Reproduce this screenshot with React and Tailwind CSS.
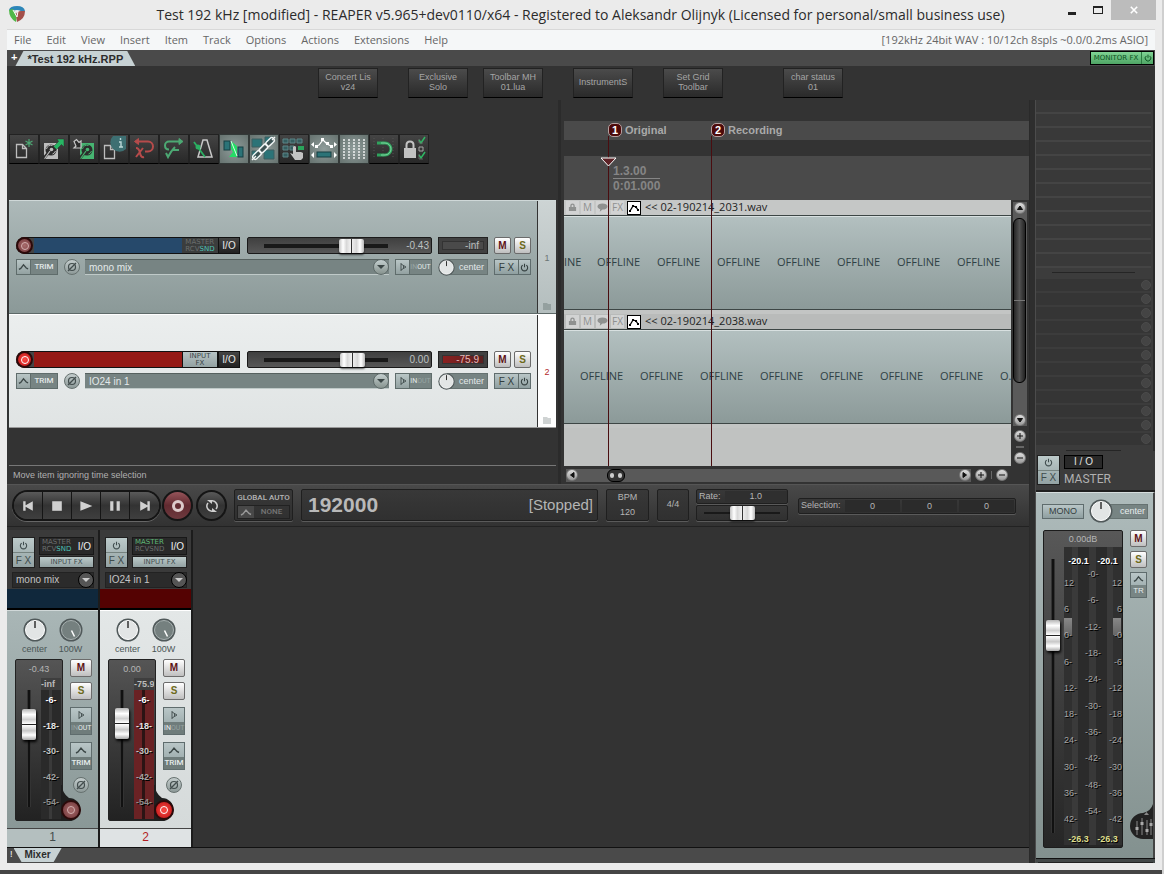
import React, { useState } from "react";

const customButtons = [
  { label: "Concert Lis v24", space: "ml-[311px]" },
  { label: "Exclusive Solo", space: "ml-[30px]" },
  { label: "Toolbar MH 01.lua", space: "ml-[15px]" },
  { label: "InstrumentS", space: "ml-[30px]" },
  { label: "Set Grid Toolbar", space: "ml-[30px]" },
  { label: "char status 01", space: "ml-[60px]" },
];

const menus = ["File", "Edit", "View", "Insert", "Item", "Track", "Options", "Actions", "Extensions", "Help"];

const tracks = [
  { id: 1, input: "mono mix", volume: "-0.43", level: 76, peak: "-inf", armed: false, selected: false },
  { id: 2, input: "IO24 in 1", volume: "0.00", level: 77, peak: "-75.9", armed: true, selected: true },
];

const items = [
  { file: "<< 02-190214_2031.wav", lead: "INE", leadWidth: "w-[33px]", tail: "", header: "bg-[#c5c7c6]" },
  { file: "<< 02-190214_2038.wav", lead: "", leadWidth: "w-4", tail: "O.", header: "bg-[#b9bbba]" },
];

const hSlider =
  "appearance-none bg-[linear-gradient(#191919,#191919)] bg-no-repeat bg-center [&::-webkit-slider-thumb]:appearance-none [&::-webkit-slider-thumb]:w-[25px] [&::-webkit-slider-thumb]:h-[14px] [&::-webkit-slider-thumb]:rounded-xs [&::-webkit-slider-thumb]:shadow-[0_2px_2px_#0009] [&::-webkit-slider-thumb]:bg-[linear-gradient(90deg,#c4c4c4,#fff_16%,#d8d8d8_30%,#f4f4f4_48%,#333_48%,#333_52%,#eee_52%,#d8d8d8_70%,#fff_84%,#b8b8b8)]";

const vSlider =
  "appearance-none [writing-mode:vertical-lr] [direction:rtl] w-[14px] bg-[linear-gradient(90deg,#555,#111_25%,#111_75%,#555)] bg-size-[4px_100%] bg-no-repeat bg-center [&::-webkit-slider-thumb]:appearance-none [&::-webkit-slider-thumb]:w-[14px] [&::-webkit-slider-thumb]:h-[31px] [&::-webkit-slider-thumb]:rounded-xs [&::-webkit-slider-thumb]:shadow-[1px_2px_3px_#000] [&::-webkit-slider-thumb]:bg-[linear-gradient(#b5b5b5,#fff_18%,#cfcfcf_34%,#fff_48%,#222_48%,#222_52%,#fff_52%,#c8c8c8_70%,#fff_84%,#aaa)]";

const lightButton = "bg-linear-to-b from-[#b9c6c7] to-[#8f9fa0] border border-[#5f6c6d]";

const Power = ({ className }) => (
  <svg viewBox="0 0 10 10" className={className} fill="none" stroke="currentColor" strokeWidth="1.2">
    <path d="M3 2.4a3.5 3.5 0 1 0 4 0M5 .8v4" />
  </svg>
);

const Envelope = ({ className }) => (
  <svg viewBox="0 0 12 10" className={className} fill="none" stroke="currentColor" strokeWidth="1.4">
    <path d="M1 8l2-1 3-4 3 3.500 2 1" />
  </svg>
);

const Phase = ({ label }) => (
  <button
    aria-label={label}
    className="w-4 h-4 shrink-0 rounded-full border border-[#66716f] bg-linear-to-b from-[#c4cdcd] to-[#8d9998] text-[#424d4d]"
  >
    <svg viewBox="0 0 14 14" fill="none" stroke="currentColor" strokeWidth="1.2">
      <circle cx="7" cy="7" r="3.500" />
      <path d="M3 11l8-8" />
    </svg>
  </button>
);

const Speaker = () => (
  <svg viewBox="0 0 10 10" className="w-[10px] h-[10px]" fill="none" stroke="#4a5656">
    <path d="M3 1v8M3 2l5 3-5 3M5.500 3.500v3" />
  </svg>
);

const Mute = ({ className }) => (
  <button
    aria-label="Mute"
    className={`rounded-xs border border-[#6b6b6b] bg-linear-to-b from-white to-[#bfbfbf] text-[10px] leading-[12px] font-bold text-[#5e1217] ${className}`}
  >
    M
  </button>
);

const Solo = ({ className }) => (
  <button
    aria-label="Solo"
    className={`rounded-xs border border-[#6b6b6b] bg-linear-to-b from-white to-[#bfbfbf] text-[10px] leading-[12px] font-bold text-[#6d6a1b] ${className}`}
  >
    S
  </button>
);

const Arm = ({ armed, className }) => (
  <button
    aria-label="Record arm"
    className={`flex items-center justify-center shrink-0 rounded-full border-2 border-[#2c0a0a] ${
      armed ? "bg-radial from-[#ff4a45] to-[#b8060f]" : "bg-radial from-[#a86c6c] to-[#6e3337]"
    } ${className}`}
  >
    <span className={`w-2 h-2 rounded-full border ${armed ? "border-white" : "border-[#d3aeae]"}`} />
  </button>
);

const PanKnob = ({ label, size, dark }) => (
  <button aria-label={label} className={`relative z-10 ${size} shrink-0`}>
    <svg viewBox="0 0 24 24">
      <circle cx="12" cy="12" r="11.500" fill="#50595a" />
      <circle cx="12" cy="12" r="9.500" fill={dark ? "#75807f" : "#e2e5e5"} stroke={dark ? "#a7b0b0" : "#fff"} strokeWidth="1" />
      <path d={dark ? "M12.500 12.500l3 6" : "M12 3v7"} stroke={dark ? "#fff" : "#333"} strokeWidth="1.5" />
    </svg>
  </button>
);

/* ---------- toolbar ---------- */

const Disk = ({ x, y, color }) => (
  <g>
    <rect x={x} y={y} width="14" height="16" fill={color} />
    <circle cx={x + 7} cy={y + 7} r="5.500" fill="#2c2c2c" />
    <path d={`M${x + 2.5} ${y + 6}a4.500 4.500 0 0 1 6-3.500M${x + 11.5} ${y + 8}a4.500 4.500 0 0 1-3 3`} fill="none" stroke={color} />
    <circle cx={x + 7.5} cy={y + 6.5} r="1.800" fill={color} />
    <path d={`M${x} ${y + 15}l6-7`} stroke="#2c2c2c" strokeWidth="3" />
    <path d={`M${x + 1} ${y + 15}l5-7`} stroke={color} strokeWidth="1.200" />
  </g>
);

const page = (x, y) => `M${x} ${y}h6l4 4v9h-10zM${x + 6} ${y}v4h4`;

const toolbar = [
  {
    name: "New project",
    icon: (
      <g fill="none">
        <path d={page(7.5, 10.5)} stroke="#bdbdbd" strokeWidth="1.300" />
        <path d="M20 5v8M16.500 7l7 4M23.500 7l-7 4" stroke="#4da673" strokeWidth="1.200" />
      </g>
    ),
  },
  {
    name: "Open project",
    icon: (
      <g>
        <Disk x={5} y={9} color="#bdbdbd" />
        <path d="M18 5h7v8l-2.500-2.500-5 5-3-3 5-5z" fill="#27b563" stroke="#2c2c2c" strokeWidth=".5" />
      </g>
    ),
  },
  {
    name: "Save project",
    icon: (
      <g>
        <Disk x={11} y={9} color="#46b471" />
        <path d="M5 7.500l2.500-2 2.500 3 2-1.500v7h-7l2-2z" fill="#2c2c2c" stroke="#c8c8c8" strokeWidth="1.200" />
      </g>
    ),
  },
  {
    name: "Project settings",
    icon: (
      <g>
        <path d={page(5.5, 11.5)} fill="none" stroke="#bdbdbd" strokeWidth="1.300" />
        <path d="M27 2H14a8 8 0 0 0 13 13z" fill="#3d6f72" />
        <path d="M21.500 4v2M20 8h2v5M20 13h4" fill="none" stroke="#bcd9d9" strokeWidth="1.400" />
      </g>
    ),
  },
  {
    name: "Undo",
    icon: (
      <g fill="none" stroke="#b64b4b" strokeWidth="2">
        <path d="M7 7.500h12a5 5 0 0 1 0 10h-3" />
        <path d="M9.500 4.500l-4 3 4 3z" fill="#b64b4b" strokeWidth="1" />
        <path d="M7 14q3 0 4 5t4 4M14 14l-7 9" />
      </g>
    ),
  },
  {
    name: "Redo",
    icon: (
      <g fill="none" stroke="#4ca873" strokeWidth="2">
        <path d="M22 7.500h-12a4 4 0 0 0-4 4q0 4 4 4M14 16h6" />
        <path d="M20 4.500l4 3-4 3z" fill="#4ca873" strokeWidth="1" />
        <path d="M7 19l2 4q3-6 7-10" />
      </g>
    ),
  },
  {
    name: "Metronome",
    icon: (
      <g fill="none">
        <path d="M14 6h4l5 17H9z" stroke="#c8c8c8" strokeWidth="1.500" />
        <path d="M5 8l11 15" stroke="#2bb062" strokeWidth="1.800" />
        <circle cx="9" cy="13" r="2.500" fill="#2bb062" />
      </g>
    ),
  },
  {
    name: "Auto crossfade",
    on: true,
    icon: (
      <g>
        <rect x="5" y="7" width="6" height="9" fill="#2b7377" stroke="#173f42" />
        <rect x="19" y="13" width="5" height="10" fill="#2b7377" stroke="#173f42" />
        <path d="M12 7l6 5v11h-8l4-5-2-3z" fill="#25dc66" />
        <path d="M12 7l6 15" stroke="#d6ffe4" strokeWidth="1" />
      </g>
    ),
  },
  {
    name: "Item grouping",
    on: true,
    icon: (
      <g>
        <path d="M3 5h10v8H3zM16 3h8v6h-8zM3 17h7v7H3zM15 16h10v9H15z" fill="#2b7377" stroke="#3e5f60" />
        <path d="M4 25L25 4" stroke="#3d5152" strokeWidth="3" />
        <g fill="none" stroke="#f2f5f5" strokeWidth="1.400">
          <rect x="-5" y="-2.500" width="10" height="5" rx="2.500" transform="translate(8 21) rotate(-45)" />
          <rect x="-5" y="-2.500" width="10" height="5" rx="2.500" transform="translate(14.500 14.500) rotate(-45)" />
          <rect x="-5" y="-2.500" width="10" height="5" rx="2.500" transform="translate(21 8) rotate(-45)" />
          <path d="M3 26l4-4M23 6l3-3" />
        </g>
      </g>
    ),
  },
  {
    name: "Ripple editing",
    icon: (
      <g>
        <path
          d="M4 5h5v4h-5zM11 5h5v4h-5zM18 5h5v4h-5zM4 12h5v4h-5zM11 12h4v4h-4zM4 19h5v4h-5z"
          fill="#355d5f"
          stroke="#5d8688"
        />
        <rect x="19" y="12" width="6" height="4" fill="#2aa45b" />
        <path d="M14 13q2-2 3 0v5h5l2 1v5l-2 2h-6l-5-7 3 1z" fill="#c3c3c3" />
      </g>
    ),
  },
  {
    name: "Envelope points move with items",
    on: true,
    icon: (
      <g>
        <path d="M7 12l3-1 4-5 4 4 4 2" fill="none" stroke="#fff" strokeWidth="1.200" />
        <path d="M6 11h3v3h-3zM12 4h3v3h-3zM17 8h3v3h-3zM21 11h3v3h-3z" fill="#fff" />
        <path d="M5 8v5l-3-2.500zM25 8v5l3-2.500zM5 18v6l-3-3zM25 18v6l3-3z" fill="#fff" />
        <rect x="8" y="18" width="14" height="5" fill="#2b7377" stroke="#173f42" />
      </g>
    ),
  },
  {
    name: "Grid lines",
    on: true,
    icon: <path d="M5 5v20M10 5v20M15 5v20M20 5v20M25 5v20" stroke="#fff" strokeWidth="1.300" strokeDasharray="2 1" />,
  },
  {
    name: "Snapping",
    icon: (
      <g fill="none">
        <path d="M5 4v20M14 4v20M24 4v20" stroke="#555" strokeDasharray="1 2" />
        <path d="M8 9h8a5.500 5.500 0 0 1 0 12H8" stroke="#2fa35d" strokeWidth="3" />
        <path d="M12 9h4a5.500 5.500 0 0 1 0 12h-4" stroke="#7fd3a0" strokeWidth="1" />
      </g>
    ),
  },
  {
    name: "Locking",
    icon: (
      <g fill="none">
        <rect x="5" y="14" width="12" height="10" fill="#c3c3c3" />
        <path d="M7.500 14v-3q0-3.500 3.500-3.500t3.500 3.500v3" stroke="#c3c3c3" strokeWidth="2" />
        <path d="M20 13h4v4h-4z" stroke="#a5a5a5" />
        <path d="M20 6l2 3 4-6M20 21l2 3 4-6" stroke="#2fb864" strokeWidth="1.500" />
        <path d="M20 5v4h4M20 20v5h4" stroke="#777" strokeWidth=".7" />
      </g>
    ),
  },
];

/* ---------- track panel ---------- */

const RoutingLabel = ({ master, send }) => (
  <span className="font-['DejaVu_Sans'] text-[7px] leading-[7px] text-left">
    <span className={`block ${master ? "text-[#5fb877]" : "text-[#6a6d6d]"}`}>MASTER</span>
    <span className="text-[#6a6d6d]">RCV</span>
    <span className={send ? "text-[#4cc0b5]" : "text-[#6a6d6d]"}>SND</span>
  </span>
);

const TrackRow = ({ track }) => {
  const { id, armed, selected } = track;
  return (
    <div
      className={`flex h-[114px] border-t border-b ${
        selected
          ? "border-t-white border-b-[#999] bg-linear-to-b from-[#ebeeee] to-[#e0e4e4]"
          : "border-t-[#cfd8d8] border-b-[#5d6968] bg-linear-to-b from-[#adb9b9] to-[#8b9998]"
      }`}
    >
      <div className="flex-1 min-w-0 pl-[7px] pr-[6px] pt-[36px] flex flex-col gap-[5px]">
        <div className="flex h-[17px]">
          <div className="flex flex-1 min-w-0 items-center bg-[#444] border-y border-[#111] rounded-l-full">
            <Arm armed={armed} className="w-[17px] h-[17px]" />
            <input
              aria-label={`Track ${id} name`}
              defaultValue=""
              className={`flex-1 min-w-0 h-full ml-px px-1 text-[10px] text-white ${armed ? "bg-[#951915]" : "bg-[#26496b]"}`}
            />
            {armed ? (
              <button className="w-[36px] h-full bg-linear-to-b from-[#b7c3c4] to-[#93a1a2] font-['DejaVu_Sans'] text-[7px] leading-[7px] text-[#394446] border-x border-[#111]">
                INPUT
                <br />
                FX
              </button>
            ) : (
              <button className="flex items-center justify-center w-[36px] h-full bg-[#3b3d3d]">
                <RoutingLabel send />
              </button>
            )}
            <button className="w-[22px] h-full bg-linear-to-b from-[#454545] to-[#222] text-[10px] leading-[15px] text-[#e8e8e8] border-x border-[#111]">
              I/O
            </button>
          </div>
          <div className="ml-[7px] w-[185px] flex items-center bg-linear-to-b from-[#404040] to-[#575757] border border-[#1a1a1a] rounded-xs">
            <input
              type="range"
              aria-label={`Track ${id} volume`}
              defaultValue={track.level}
              className={`ml-4 w-[124px] h-[14px] bg-size-[100%_4px] ${hSlider}`}
            />
            <output className="flex-1 pr-0.5 text-right text-[10px] text-[#bdc1c1]">{track.volume}</output>
          </div>
          <div className="ml-[6px] w-[50px] p-[3px] bg-[#414141] border border-[#222]">
            <div
              className={`h-full pr-1 text-right text-[10px] leading-[8px] border border-[#333] ${
                armed ? "bg-linear-to-r from-[#8a1f1f] to-[#592020] text-[#e4b9b9]" : "bg-[#4a4a4a] text-[#b9bdbd]"
              }`}
            >
              {track.peak}
            </div>
          </div>
          <Mute className="ml-[6px] w-[17px] h-[17px]" />
          <Solo className="ml-[3px] w-[17px] h-[17px]" />
        </div>
        <div className="flex h-4 text-[9px] text-[#e3e9e9]">
          <button className="flex items-center w-[42px] bg-[#778483] border border-[#5f6c6b] font-['Roboto'] text-[8px] font-medium">
            <span className="flex items-center justify-center w-[14px] h-full bg-linear-to-b from-[#b9c6c6] to-[#93a1a1] border-r border-[#5f6c6b] text-[#3d4848]">
              <Envelope className="w-[11px]" />
            </span>
            <span className="flex-1 text-center">TRIM</span>
          </button>
          <div className="w-[27px] flex justify-center">
            <Phase label={`Track ${id} phase`} />
          </div>
          <div className="relative flex-1 min-w-0">
            <select
              aria-label={`Track ${id} input`}
              className="appearance-none w-full h-full pl-1 pr-5 bg-[#778483] border-t border-[#56615f] border-b border-b-[#bfc9c8] text-[10px] leading-[13px] text-[#e3e9e9]"
            >
              <option>{track.input}</option>
            </select>
            <span className="absolute right-0 top-0 flex items-center justify-center w-4 h-4 rounded-full border border-[#5d6968] bg-linear-to-b from-[#c4cfcf] to-[#87938f] pointer-events-none">
              <svg viewBox="0 0 8 6" className="w-2" fill="#3b4646">
                <path d="M0 1h8L4 5z" />
              </svg>
            </span>
          </div>
          <button className="ml-[6px] w-[37px] flex items-center bg-[#778483] border border-[#5f6c6b] font-['Roboto'] text-[8px]">
            <span className="flex items-center justify-center w-[14px] h-full bg-linear-to-b from-[#b9c6c6] to-[#93a1a1] border-r border-[#5f6c6b]">
              <Speaker />
            </span>
            <span className="flex-1 text-[7px]">
              <span className={armed ? "" : "text-[#98a4a3]"}>IN</span>
              <span className={armed ? "text-[#98a4a3]" : ""}>OUT</span>
            </span>
          </button>
          <div className="ml-[6px] w-[50px] flex items-center">
            <PanKnob label={`Track ${id} pan`} size="w-[17px] h-[17px]" />
            <span className="-ml-2 flex-1 h-full pr-[3px] text-right leading-[14px] bg-[#778483] border border-[#667271]">center</span>
          </div>
          <div className={`ml-[6px] w-[37px] flex ${lightButton} text-[#333e3e]`}>
            <button className="w-[23px] text-[10px] leading-[13px]">F X</button>
            <button aria-label="Bypass effects" className="flex-1 flex items-center justify-center border-l border-[#5f6c6b]">
              <Power className="w-[9px]" />
            </button>
          </div>
        </div>
      </div>
      <div
        className={`w-[19px] flex flex-col items-center justify-end gap-[38px] pb-[3px] border-l border-[#333] text-[9px] ${
          selected ? "bg-white text-[#b3282d]" : "bg-linear-to-b from-[#cdd4d4] to-[#b4bebe] text-[#6c7575]"
        }`}
      >
        {id}
        <svg viewBox="0 0 8 7" className="w-2" fill={selected ? "#cfd3d3" : "#94a09f"}>
          <path d="M0 0h4l1 1h3v6H0z" />
        </svg>
      </div>
    </div>
  );
};

/* ---------- arrange view ---------- */

const Item = ({ item }) => (
  <div className="h-[114px] bg-[#c3c5c4]">
    <div className={`flex items-center h-[15px] pl-0.5 gap-0.5 font-['Open_Sans'] text-[10px] text-[#8f9190] ${item.header}`}>
      <span className="flex items-center justify-center w-[13px] h-[13px] bg-[#d2d3d3]">
        <svg viewBox="0 0 10 10" className="w-[9px]" fill="#8f9190">
          <path d="M1 4.500h8V9H1zM2.500 5V3q0-2.500 2.500-2.500T7.500 3v2H6V3q0-1-1-1T4 3v2z" />
        </svg>
      </span>
      <span className="w-[13px] h-[13px] leading-[13px] text-center bg-[#d2d3d3]">M</span>
      <span className="flex items-center justify-center w-[13px] h-[13px] bg-[#d2d3d3]">
        <svg viewBox="0 0 12 10" className="w-[11px]" fill="#8f9190">
          <path d="M6 .5c3 0 5.500 1.300 5.500 3.300S9 7.200 6 7.200L3 9.500l.5-2.800C1.500 6 .5 5 .5 3.800.5 1.800 3 .5 6 .5z" />
        </svg>
      </span>
      <span className="w-[13px] h-[13px] leading-[13px] text-center bg-[#d2d3d3]">FX</span>
      <button aria-label="Take envelopes" className="ml-px w-[14px] h-[14px] bg-white border border-black">
        <svg viewBox="0 0 12 12" fill="none" stroke="#000" strokeWidth="1.300">
          <path d="M2 9l3-5 3 1 2 3" />
          <path d="M1 8h2v2H1zM4 3h2v2H4zM7 4h2v2H7zM9 7h2v2H9z" fill="#000" strokeWidth="0" />
        </svg>
      </button>
      <span className="ml-0.5 text-[11px] text-[#1e2424] whitespace-nowrap">{item.file}</span>
    </div>
    <div className="h-[95px] overflow-hidden flex items-center border-t border-b border-[#3d4645] bg-linear-to-b from-[#b3c0c0] to-[#8c9a99] shadow-[inset_0_1px_#d8e0e0] font-['Open_Sans'] text-[11px] text-[#2f4144]">
      <span className={`shrink-0 ${item.leadWidth}`}>{item.lead}</span>
      {Array.from({ length: 7 }, (_, i) => (
        <span key={i} className="w-[60px] shrink-0">
          OFFLINE
        </span>
      ))}
      <span>{item.tail}</span>
    </div>
  </div>
);

const RoundButton = ({ label, d }) => (
  <button aria-label={label} className="w-3 h-3 shrink-0 rounded-full bg-linear-to-b from-[#dedede] to-[#9a9a9a] border border-[#777]">
    <svg viewBox="0 0 10 10" fill="#111" stroke="#111">
      <path d={d} />
    </svg>
  </button>
);

const plus = "M2 5h6M5 2v6";
const minus = "M2 5h6";

const Marker = ({ n, name, left, line }) => (
  <>
    <div className={`absolute top-[22px] ${left} flex items-center gap-[3px] text-[11px] font-bold text-[#a9a9a9]`}>
      <span className="w-[14px] h-[14px] rounded-[5px] border border-[#b5a0a0] bg-[#4d0a0a] text-center text-[11px] leading-[12px] text-white">
        {n}
      </span>
      {name}
    </div>
    <div className={`absolute top-[36px] bottom-[18px] ${line} w-px bg-[#4a0d10]`} />
  </>
);

const Arrange = () => (
  <div className="relative flex-1 min-w-0 flex flex-col pt-[21px]">
    <div className="h-[19px] bg-[#4a4a4a]" />
    <div className="mt-4 h-[44px] pt-2 pl-[49px] bg-[#4a4a4a] text-[#858585] text-[12px] leading-[14px]">
      <span className="inline-block font-bold">
        <span className="block border-b border-[#858585]">1.3.00</span>
        0:01.000
      </span>
    </div>
    <div className="flex flex-1">
      <div className="flex-1 min-w-0 bg-[#c0c2c1]">
        {items.map((item) => (
          <Item key={item.file} item={item} />
        ))}
      </div>
      <div className="w-[18px] flex flex-col items-center pt-0.5 pr-px bg-[#333]">
        <div className="flex-1 flex flex-col items-center w-[14px] bg-[#5a5a5a]">
          <RoundButton label="Scroll up" d="M5 3l2.500 3.500h-5z" />
          <button
            aria-label="Vertical scroll"
            className="mt-1 flex items-center w-[13px] h-[165px] rounded-md border border-black bg-linear-to-r from-[#262626] via-[#525252] to-[#222]"
          >
            <span className="w-full h-px bg-[#777]" />
          </button>
          <span className="flex-1" />
          <RoundButton label="Scroll down" d="M5 7l2.500-3.500h-5z" />
        </div>
        <div className="flex flex-col items-center gap-1 pt-1 pb-0.5">
          <RoundButton label="Zoom in vertically" d={plus} />
          <span className="w-2 h-0.5 bg-[#666]" />
          <RoundButton label="Zoom out vertically" d={minus} />
        </div>
      </div>
    </div>
    <div className="flex items-center h-[18px] pl-0.5 pr-[21px] gap-1 bg-[#333]">
      <div className="flex flex-1 items-center h-[13px] bg-[#595959]">
        <RoundButton label="Scroll left" d="M3.500 5l3.500-2.500v5z" />
        <button
          aria-label="Horizontal scroll"
          className="ml-[29px] flex items-center justify-center gap-1 w-[18px] h-[13px] rounded-md border border-black bg-[#333]"
        >
          <span className="w-1 h-[5px] rounded-full bg-[#ccc]" />
          <span className="w-1 h-[5px] rounded-full bg-[#ccc]" />
        </button>
        <span className="flex-1" />
        <RoundButton label="Scroll right" d="M6.500 5L3 2.500v5z" />
      </div>
      <RoundButton label="Zoom in" d={plus} />
      <span className="w-px h-2 bg-[#666]" />
      <RoundButton label="Zoom out" d={minus} />
    </div>
    <Marker n={1} name="Original" left="left-[44px]" line="left-[44px]" />
    <Marker n={2} name="Recording" left="left-[147px]" line="left-[147px]" />
    <svg viewBox="0 0 17 10" className="absolute top-[57px] left-[36px] w-[17px]">
      <path d="M1 1h15L8.500 9z" fill="#5c2226" stroke="#fff" />
    </svg>
  </div>
);

/* ---------- transport ---------- */

const transportButtons = [
  { name: "Go to start", d: "M4 4h3v5l9-5v12l-9-5v5H4z" },
  { name: "Stop", d: "M4 4h12v12H4z" },
  { name: "Play", d: "M3 4l15 6-15 6z" },
  { name: "Pause", d: "M4 4h4v12H4zM12 4h4v12h-4z" },
  { name: "Go to end", d: "M16 4h-3v5L4 4v12l9-5v5h3z" },
];

const box = "border border-[#1f1f1f] rounded-xs bg-linear-to-b from-[#383838] to-[#303030] shadow-[0_1px_#5a5a5a]";

const Transport = () => (
  <div className="h-[43px] shrink-0 flex items-start pt-1 pl-[5px] pr-[13px] bg-linear-to-b from-[#494949] to-[#323232] border-t border-[#555] border-b border-b-[#222] text-[#b5b5b5]">
    <div className="mt-px flex h-[31px] rounded-full overflow-hidden border-2 border-[#151515] shadow-[0_1px_#666]">
      {transportButtons.map((b) => (
        <button
          key={b.name}
          aria-label={b.name}
          className="flex items-center justify-center w-[29px] bg-linear-to-b from-[#5a5a5a] via-[#333] to-[#3f3f3f] not-last:border-r border-[#151515]"
        >
          <svg viewBox="0 0 20 20" className="w-4" fill="#d0d0d0">
            <path d={b.d} />
          </svg>
        </button>
      ))}
    </div>
    <button
      aria-label="Record"
      className="mt-px ml-px flex items-center justify-center w-[31px] h-[31px] shrink-0 rounded-full border-2 border-[#151515] bg-linear-to-b from-[#96545a] via-[#612a30] to-[#6e3a3f]"
    >
      <span className="w-3 h-3 rounded-full border-[3px] border-[#dccaca]" />
    </button>
    <button
      aria-label="Repeat"
      className="mt-px ml-[3px] flex items-center justify-center w-[31px] h-[31px] shrink-0 rounded-full border-2 border-[#151515] bg-linear-to-b from-[#5a5a5a] via-[#333] to-[#3f3f3f]"
    >
      <svg viewBox="0 0 16 16" className="w-4" fill="none" stroke="#d0d0d0" strokeWidth="1.500">
        <path d="M7 3a5 5 0 0 1 5 8M9 13a5 5 0 0 1-5-8" />
        <path d="M3 2h5v4zM13 14H8v-4z" fill="#d0d0d0" strokeWidth="0" />
      </svg>
    </button>
    <div className={`ml-[7px] w-[59px] h-8 p-0.5 shrink-0 ${box} font-['Roboto'] text-[8px] font-medium text-center`}>
      <div className="leading-[11px] whitespace-nowrap">GLOBAL AUTO</div>
      <button className="mt-0.5 flex items-center w-full h-[14px] border border-[#222] text-[#767676]">
        <span className="flex items-center justify-center w-4 h-full bg-[#484848] text-[#999]">
          <Envelope className="w-3" />
        </span>
        <span className="flex-1">NONE</span>
      </button>
    </div>
    <div className={`ml-2 flex-1 h-8 pl-1.5 pr-1 flex items-center justify-between ${box}`}>
      <span className="text-[21px] font-bold text-[#b9b9b9]">192000</span>
      <span className="text-[15px]">[Stopped]</span>
    </div>
    <label className={`ml-2 w-[43px] h-8 flex flex-col text-center text-[9px] leading-[15px] ${box}`}>
      BPM
      <input defaultValue="120" className="w-full h-[15px] text-center" />
    </label>
    <button className={`ml-2 w-[32px] h-8 text-[9px] ${box}`}>4/4</button>
    <div className="ml-[7px] w-[92px]">
      <label className={`flex items-center h-[15px] pl-0.5 text-[9px] ${box}`}>
        Rate:
        <input defaultValue="1.0" className="ml-1 flex-1 min-w-0 h-[11px] text-center bg-[#2f2f2f]" />
      </label>
      <div className={`mt-px h-4 flex items-center px-[7px] ${box}`}>
        <input type="range" aria-label="Play rate" defaultValue="50" className={`w-full h-[14px] bg-size-[100%_2px] ${hSlider}`} />
      </div>
    </div>
    <div className={`ml-[10px] mt-[9px] w-[218px] h-4 flex items-center gap-0.5 p-px pl-0.5 text-[9px] ${box}`}>
      <span className="w-[42px]">Selection:</span>
      <input aria-label="Selection start" defaultValue="0" className="flex-1 min-w-0 h-full text-center bg-[#2b2b2b]" />
      <input aria-label="Selection end" defaultValue="0" className="flex-1 min-w-0 h-full text-center bg-[#2b2b2b]" />
      <input aria-label="Selection length" defaultValue="0" className="flex-1 min-w-0 h-full text-center bg-[#2b2b2b]" />
    </div>
  </div>
);

/* ---------- mixer ---------- */

const Strip = ({ track }) => {
  const { id, armed, selected } = track;
  return (
    <div className="w-[93px] flex flex-col border-r-2 border-[#1c1c1c]">
      <div className="h-[59px] pt-[7px] pl-[5px] pr-1 bg-[#3a3a3a]">
        <div className="flex gap-1">
          <div className="w-[23px] h-[31px] flex flex-col bg-linear-to-b from-[#bccaca] to-[#93a2a3] border border-[#202020] text-[#3f4c4d]">
            <button aria-label="Bypass effects" className="flex-1 flex items-center justify-center border-b border-[#75827f]">
              <Power className="w-[9px]" />
            </button>
            <button className="flex-1 text-[10px] leading-[13px]">F X</button>
          </div>
          <div className="flex-1">
            <button className="flex items-center justify-between w-full h-[18px] px-0.5 border border-[#181818] bg-[#292929] text-[10px] text-[#eee]">
              <RoutingLabel master={armed} send={!armed} />
              I/O
            </button>
            <button className="block w-full h-3 mt-px bg-linear-to-b from-[#bccaca] to-[#93a2a3] border border-[#202020] font-['DejaVu_Sans'] text-[7px] leading-[10px] text-[#3f4c4d]">
              INPUT FX
            </button>
          </div>
        </div>
        <div className="relative mt-1">
          <select
            aria-label={`Channel ${id} input`}
            className="appearance-none block w-full h-4 pl-[3px] bg-[#2b2b2b] border border-[#222] text-[10px] leading-[14px] text-[#c4c4c4]"
          >
            <option>{track.input}</option>
          </select>
          <span className="absolute right-0 top-0 flex items-center justify-center w-4 h-4 rounded-full border border-black bg-[#555] pointer-events-none">
            <svg viewBox="0 0 8 6" className="w-2" fill="#ccc">
              <path d="M0 1h8L4 5z" />
            </svg>
          </span>
        </div>
      </div>
      <div className={`h-[21px] border-b-2 border-black ${armed ? "bg-[#540202]" : "bg-[#10283c]"}`} />
      <div
        className={`h-[218px] pt-[7px] border-t ${
          selected ? "border-white bg-linear-to-b from-[#e3e7e7] to-[#d5dada]" : "border-[#d0d8d8] bg-linear-to-b from-[#a9b6b6] to-[#8a9897]"
        }`}
      >
        <div className="flex justify-center text-[9px] leading-[14px] text-[#4a5555]">
          <div className="w-[36px] flex flex-col items-center">
            <PanKnob label="Pan" size="w-6 h-6" />
            center
          </div>
          <div className="w-[36px] flex flex-col items-center">
            <PanKnob label="Width" size="w-6 h-6" dark />
            100W
          </div>
        </div>
        <div className="mt-[3px] pl-2 flex gap-[7px]">
          <div className="relative w-[48px] h-[162px] flex flex-col rounded-xs border border-[#222] bg-linear-to-b from-[#555] to-[#222]">
            <output className="pt-1 text-center text-[9px] leading-[10px] text-[#b5b5b5]">{track.volume}</output>
            <div className="flex flex-1 pl-[6px]">
              <input
                type="range"
                aria-label={`Channel ${id} volume`}
                defaultValue={track.level + 2}
                className={`mt-4 h-[117px] ${vSlider}`}
              />
              <div className="ml-[5px] mt-1 w-[20px] h-[141px] flex flex-col">
                <div className="h-3 overflow-hidden whitespace-nowrap bg-[#3e3e3e] text-[9px] leading-[12px] font-bold text-[#bbb]">
                  {track.peak}
                </div>
                <div
                  className={`flex-1 pt-[5px] pb-[12px] flex flex-col justify-between items-center text-[9px] leading-[10px] font-bold [text-shadow:1px_1px_#000] ${
                    armed
                      ? "bg-[linear-gradient(90deg,#6a2224_8px,#2b1414_8px,#2b1414_11px,#6a2224_11px)]"
                      : "bg-[linear-gradient(90deg,#2a2a2a_8px,#3a3a3a_8px,#3a3a3a_11px,#2a2a2a_11px)]"
                  }`}
                >
                  <span className="text-white">-6-</span>
                  <span className="text-[#e4e4e4]">-18-</span>
                  <span className="text-[#c4c4c4]">-30-</span>
                  <span className="text-[#a4a4a4]">-42-</span>
                  <span className="text-[#8e8e8e]">-54-</span>
                </div>
              </div>
            </div>
            <svg viewBox="0 0 22 36" className="absolute left-[45px] -bottom-px w-[22px] h-[36px]" fill="#1f1f1f">
              <path d="M0 0H1Q1 8 8 13A11.500 11.500 0 1 1 8 36H0z" />
            </svg>
            <Arm armed={armed} className="absolute left-[45px] bottom-0 w-[20px] h-[20px]" />
          </div>
          <div className="flex flex-col w-[22px]">
            <Mute className="h-[18px]" />
            <Solo className="mt-[5px] h-[18px]" />
            <button className={`mt-[7px] h-[28px] flex flex-col ${lightButton} font-['Roboto'] text-[7px] text-[#e6ecec]`}>
              <span className="h-[14px] w-full flex items-center justify-center">
                <Speaker />
              </span>
              <span className="flex-1 w-full leading-[12px] bg-[#6f7c7b]">
                <span className={armed ? "" : "text-[#96a2a1]"}>IN</span>
                <span className={armed ? "text-[#96a2a1]" : ""}>OUT</span>
              </span>
            </button>
            <button className={`mt-[7px] h-[28px] flex flex-col ${lightButton} text-[#3c4747]`}>
              <span className="h-[14px] w-full flex items-center justify-center">
                <Envelope className="w-3" />
              </span>
              <span className="flex-1 w-full leading-[12px] bg-[#6f7c7b] font-['Roboto'] text-[8px] font-medium text-[#e6ecec]">TRIM</span>
            </button>
            <div className="mt-[7px] flex justify-center">
              <Phase label={`Channel ${id} phase`} />
            </div>
          </div>
        </div>
      </div>
      <div
        className={`h-[19px] border-t border-[#444] text-center text-[12px] leading-[17px] ${
          selected ? "bg-[#dfe3e4] text-[#b31d22]" : "bg-[#b4bfbf] text-[#434c4c]"
        }`}
      >
        {id}
      </div>
    </div>
  );
};

/* ---------- master ---------- */

const midScale = ["-0-", "-6-", "-12-", "-18-", "-24-", "-30-", "-36-", "-42-", "-48-", "-54-"];
const leftScale = ["12", "6", "0-", "6-", "12-", "18-", "24-", "30-", "36-", "42-"];
const rightScale = ["12", "6", "-0", "-6", "-12", "-18", "-24", "-30", "-36", "-42"];

const Master = () => (
  <aside className="w-[120px] shrink-0 flex flex-col border-l border-[#4c4c4c] bg-[#3c3c3c]">
    <div className="border-r-2 border-[#2a2a2a] pr-0.5">
      {Array.from({ length: 12 }, (_, i) => (
        <div key={i} className="h-[14px] border-b-2 border-[#444] bg-[#393939]" />
      ))}
      <div className="mx-4 mt-1 h-[7px] border-t border-[#252525]" />
      {Array.from({ length: 12 }, (_, i) => (
        <div key={i} className="h-[14px] flex justify-end border-b-2 border-[#3c3c3c] bg-[#353535]">
          <span className="w-[10px] h-[10px] mt-px rounded-full bg-[#444] border border-[#4b4b4b]" />
        </div>
      ))}
      <div className="mx-[30px] mt-[3px] border-t border-[#252525]" />
    </div>
    <div className="flex gap-1 pt-1 pl-px h-[41px] border-b-2 border-[#1f1f1f]">
      <div className="w-[23px] h-[30px] flex flex-col bg-linear-to-b from-[#bccaca] to-[#93a2a3] border border-[#202020] text-[#3f4c4d]">
        <button aria-label="Bypass master effects" className="flex-1 flex items-center justify-center border-b border-[#75827f]">
          <Power className="w-[9px]" />
        </button>
        <button className="flex-1 text-[10px] leading-[13px]">F X</button>
      </div>
      <div>
        <button className="block w-[39px] h-[14px] border border-black bg-[#292929] text-[10px] leading-[12px] text-[#e2e2e2]">I / O</button>
        <div className="mt-0.5 font-['Roboto'] text-[12px] leading-[16px] text-[#b0b0b0]">MASTER</div>
      </div>
    </div>
    <div className="relative h-[366px] border-t border-t-[#d5dddd] border-r-2 border-r-[#444] bg-linear-to-b from-[#aebbbb] to-[#83918f]">
      <div className="flex items-center pl-[6px] pr-[5px] pt-[6px]">
        <button className={`w-[42px] h-[15px] text-[9px] leading-[13px] text-[#333e3e] ${lightButton}`}>MONO</button>
        <div className="ml-[5px] flex flex-1 items-center">
          <PanKnob label="Master pan" size="w-6 h-6" />
          <span className="-ml-3 flex-1 h-[15px] pr-0.5 text-right text-[9px] leading-[13px] text-[#e8eeee] bg-[#778483] border border-[#667271]">
            center
          </span>
        </div>
      </div>
      <div className="flex pl-[7px] pt-[7px]">
        <div className="w-[80px] h-[318px] flex flex-col rounded-xs border border-[#1c1c1c] bg-linear-to-b from-[#585858] to-[#262626]">
          <output className="h-4 leading-[16px] text-center text-[9px] text-[#b5b5b5]">0.00dB</output>
          <div className="flex flex-1 pl-0.5">
            <input type="range" aria-label="Master volume" defaultValue="75" className={`mt-3 h-[274px] ${vSlider}`} />
            <div className="relative ml-1 flex-1 mb-0.5 flex flex-col text-[9px] leading-[12px] text-[#a5a5a5] [text-shadow:1px_1px_#000] bg-[linear-gradient(90deg,#303030_8px,#3a3a3a_8px,#3a3a3a_14px,#2b2b2b_14px,#2b2b2b_25px,#383838_25px,#383838_32px,#2b2b2b_32px,#2b2b2b_43px,#3a3a3a_43px,#3a3a3a_49px,#303030_49px)]">
              <span className="absolute left-0 top-[71px] w-2 h-[17px] bg-linear-to-b from-[#888] to-[#666]" />
              <span className="absolute right-px top-[71px] w-2 h-[17px] bg-linear-to-b from-[#888] to-[#666]" />
              <div className="mt-2 flex justify-around font-bold text-white">
                <span>-20.1</span>
                <span>-20.1</span>
              </div>
              <div className="relative flex-1 flex justify-between pt-px">
                <div className="mt-[9px] h-[248px] w-[17px] flex flex-col justify-between">
                  {leftScale.map((s, i) => (
                    <span key={i}>{s}</span>
                  ))}
                </div>
                <div className="h-[249px] flex flex-col justify-between text-center">
                  {midScale.map((s) => (
                    <span key={s}>{s}</span>
                  ))}
                </div>
                <div className="mt-[9px] h-[248px] w-[17px] flex flex-col justify-between text-right">
                  {rightScale.map((s, i) => (
                    <span key={i}>{s}</span>
                  ))}
                </div>
              </div>
              <div className="flex justify-around font-bold text-[#dede8c]">
                <span>-26.3</span>
                <span>-26.3</span>
              </div>
            </div>
          </div>
        </div>
        <div className="ml-[7px] w-[17px] flex flex-col">
          <Mute className="h-[17px]" />
          <Solo className="mt-1 h-[17px]" />
          <button className={`mt-1 h-[26px] flex flex-col ${lightButton} text-[#3c4747]`}>
            <span className="h-3 w-full flex items-center justify-center">
              <Envelope className="w-[11px]" />
            </span>
            <span className="flex-1 w-full text-[8px] leading-[12px] bg-[#788584] text-[#e6ecec]">TR</span>
          </button>
        </div>
      </div>
      <button aria-label="Show mixer" className="absolute right-0 bottom-[18px] w-6 h-[36px]">
        <svg viewBox="0 0 24 36">
          <path d="M24 0Q22 7 14 9A13 13 0 0 0 14 35H24z" fill="#222" />
          <path d="M8 17v14M13 14v17M18 16v15M22 15v16" stroke="#888" />
          <path d="M6.500 23h3v3h-3zM11.500 18h3v3h-3zM16.500 25h3v3h-3zM20.500 19h3v3h-3z" fill="#aaa" />
          <path d="M15 11l2.500-3 2.500 3z" fill="#888" />
        </svg>
      </button>
    </div>
    <div className="flex-1 pt-[3px] px-0.5 bg-[#434848] border-t border-[#111]">
      <div className="border-t border-[#222]" />
    </div>
  </aside>
);

const App = () => {
  const [active, setActive] = useState(toolbar.filter((t) => t.on).map((t) => t.name));

  const toggle = (name) => {
    setActive(active.includes(name) ? active.filter((n) => n !== name) : [...active, name]);
  };

  return (
    <div className="min-h-screen flex flex-col bg-[#ebebeb] border-r-2 border-[#cfcfcf] font-['Liberation_Sans',sans-serif]">
      <header className="flex items-start h-[29px]">
        <svg viewBox="0 0 18 18" className="mt-[5px] ml-2 w-[18px] h-[18px] shrink-0">
          <path d="M1 5Q2 1 9 1t8 5l-3 2Q13 5 9 5T4 7z" fill="#2d86b8" />
          <path d="M1 5l4-1 4 7-1 6Q1 13 1 5z" fill="#4fb848" />
          <path d="M17 6q0 8-8 11L8 9q1-3 5-3z" fill="#a34f4a" />
          <path d="M5 5l4 7 1-6" fill="none" stroke="#fff" />
        </svg>
        <h1 className="flex-1 pl-[76px] text-center font-['Open_Sans'] text-[14px] leading-[29px] text-[#2b2b2b] whitespace-nowrap">
          Test 192 kHz [modified] - REAPER v5.965+dev0110/x64 - Registered to Aleksandr Olijnyk (Licensed for personal/small business use)
        </h1>
        <div className="flex">
          <button aria-label="Minimize" className="w-[26px] h-5 flex justify-center">
            <span className="mt-3 w-2 h-[3px] bg-[#222]" />
          </button>
          <button aria-label="Maximize" className="w-[26px] h-5 flex justify-center">
            <span className="mt-1.5 w-[10px] h-2 border border-t-2 border-[#222]" />
          </button>
          <button aria-label="Close" className="mr-[6px] w-[45px] h-5 flex items-center justify-center bg-[#bcbcbc]">
            <svg viewBox="0 0 10 10" className="w-2" stroke="#fff" strokeWidth="2">
              <path d="M1 1l8 8M9 1L1 9" />
            </svg>
          </button>
        </div>
      </header>

      <div className="flex-1 flex flex-col ml-[7px] mr-[7px] mb-[11px]">
        <nav className="flex items-center h-[21px] pl-[7px] pr-[7px] border-t border-[#d8d8d8] bg-[#f5f7f8] font-['Open_Sans'] text-[11px] text-[#666]">
          <div className="flex flex-1 gap-[15px]">
            {menus.map((m) => (
              <button key={m}>{m}</button>
            ))}
          </div>
          <span>[192kHz 24bit WAV : 10/12ch 8spls ~0.0/0.2ms ASIO]</span>
        </nav>

        <main className="flex-1 flex flex-col bg-[#333]">
          <div className="flex items-end h-4 pl-1 pr-px bg-[#4a4a4a]">
            <button aria-label="New project tab" className="self-start text-[11px] leading-[14px] font-bold text-white">
              +
            </button>
            <button className="-ml-0.5 h-[15px] px-3 bg-[#c7d2d4] text-[11px] leading-[14px] font-bold text-[#2c2c2c] [clip-path:polygon(8px_0,calc(100%_-_8px)_0,100%_100%,0_100%)]">
              *Test 192 kHz.RPP
            </button>
            <span className="flex-1" />
            <div className="flex self-center h-[14px] border border-black bg-linear-to-b from-[#7fd394] to-[#4fa565] font-['DejaVu_Sans'] text-[7px] leading-[12px] text-[#0d5422]">
              <button className="w-[50px] whitespace-nowrap">MONITOR FX</button>
              <button aria-label="Bypass monitor effects" className="w-3 flex items-center justify-center border-l border-[#2c7a42]">
                <Power className="w-2" />
              </button>
            </div>
          </div>

          <div className="flex h-[34px] pt-0.5">
            {customButtons.map((b) => (
              <button
                key={b.label}
                className={`w-[60px] h-[30px] px-0.5 pb-0.5 border border-[#222] border-b-black bg-linear-to-b from-[#4b4b4b] to-[#2a2a2a] text-[9px] leading-[10px] text-[#a5a5a5] ${b.space}`}
              >
                {b.label}
              </button>
            ))}
          </div>

          <div className="flex-1 flex">
            <div className="flex-1 min-w-0 flex flex-col">
              <div className="flex">
                <div className="w-[549px] pl-0.5 flex flex-col">
                  <div className="mt-[34px] flex">
                    {toolbar.map((t) => (
                      <button
                        key={t.name}
                        aria-label={t.name}
                        aria-pressed={active.includes(t.name)}
                        onClick={() => toggle(t.name)}
                        className={`w-[30px] h-[30px] border ${
                          active.includes(t.name)
                            ? "border-[#333938] bg-radial from-[#8f9d9b] to-[#66726f]"
                            : "border-[#222] border-b-black bg-linear-to-b from-[#444] to-[#282828]"
                        }`}
                      >
                        <svg viewBox="1 1 28 28">{t.icon}</svg>
                      </button>
                    ))}
                  </div>
                  <div className="mt-9">
                    {tracks.map((track) => (
                      <TrackRow key={track.id} track={track} />
                    ))}
                  </div>
                  <div className="mt-[37px] h-[19px] pl-1 border-t border-[#777] text-[9px] leading-[19px] text-[#b0b0b0]">
                    Move item ignoring time selection
                  </div>
                </div>
                <div className="w-[3px] mx-[2px] mr-[3px] bg-[#2b2b2b]" />
                <Arrange />
              </div>

              <Transport />

              <div className="flex-1 flex pt-[3px]">
                {tracks.map((track) => (
                  <Strip key={track.id} track={track} />
                ))}
              </div>

              <div className="flex h-[16px] pl-[3px] bg-[#4a4a4a] border-t border-[#111]">
                <span className="text-[9px] text-white">!</span>
                <button className="ml-px h-[14px] px-[11px] bg-[#c7d2d4] text-[10px] leading-[14px] font-bold text-[#2c2c2c] [clip-path:polygon(0_0,100%_0,calc(100%_-_8px)_100%,8px_100%)]">
                  Mixer
                </button>
              </div>
            </div>
            <div className="w-[6px] border-l border-[#2a2a2a] bg-[#2e2e2e]" />
            <Master />
          </div>
        </main>
      </div>
      <div className="-mt-1 h-1 bg-[#454545]" />
    </div>
  );
};

export default App;
